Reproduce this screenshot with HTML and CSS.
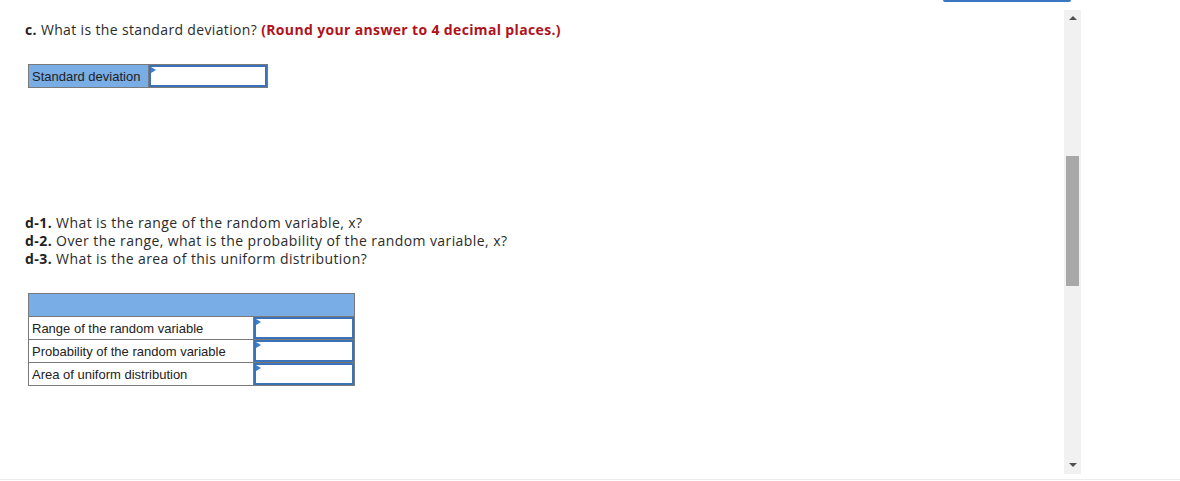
FILE: index.html
```html
<!DOCTYPE html>
<html>
<head>
<meta charset="utf-8">
<link rel="stylesheet" href="styles.css">
</head>
<body>
<div class="topbar"></div>
<div class="page">
  <div class="main">
    <p class="q"><b>c.</b> What is the standard deviation? <span class="red">(Round your answer to 4 decimal places.)</span></p>
    <table class="grid sd">
      <tr>
        <td class="lbl blue">Standard deviation</td>
        <td class="inp w-sd"><div class="box"><span class="tri"></span></div></td>
      </tr>
    </table>
    <div class="qd">
      <p><b>d-1.</b> What is the range of the random variable, x?</p>
      <p><b>d-2.</b> Over the range, what is the probability of the random variable, x?</p>
      <p><b>d-3.</b> What is the area of this uniform distribution?</p>
    </div>
    <table class="grid t2">
      <tr><td class="head" colspan="2"></td></tr>
      <tr>
        <td class="lbl wl">Range of the random variable</td>
        <td class="inp wi"><div class="box"><span class="tri"></span></div></td>
      </tr>
      <tr>
        <td class="lbl wl">Probability of the random variable</td>
        <td class="inp wi"><div class="box"><span class="tri"></span></div></td>
      </tr>
      <tr>
        <td class="lbl wl">Area of uniform distribution</td>
        <td class="inp wi"><div class="box"><span class="tri"></span></div></td>
      </tr>
    </table>
  </div>
  <div class="scroll">
    <div class="arrow up"></div>
    <div class="track"><div class="thumb"></div></div>
    <div class="arrow down"></div>
  </div>
</div>
<div class="footer"></div>
</body>
</html>
```
FILE: styles.css
```css
html, body { margin: 0; padding: 0; background: #fff; }
body { width: 1180px; height: 481px; overflow: hidden; position: relative; font-family: "Open Sans", "Liberation Sans", sans-serif; color: #2b2b2b; }
.topbar { position: absolute; left: 943px; top: 0; width: 128px; height: 2px; background: #3a76c2; border-radius: 0 0 2px 2px; }
.page { display: flex; height: 479px; }
.main { width: 1039px; padding: 21px 0 0 25px; }
.q { margin: 0; font-size: 14px; line-height: 18px; letter-spacing: 0.35px; }
.q b { color: #222; }
.red { color: #b0121b; font-weight: bold; }
.grid { border-collapse: collapse; font-family: "Liberation Sans", Arial, sans-serif; font-size: 13px; color: #222; }
.sd { margin: 25px 0 0 3px; }
.grid td { border: 1px solid #7a7a7a; padding: 0; height: 22px; }
.lbl { padding-left: 3px !important; white-space: nowrap; vertical-align: middle; }
.blue { background: #79ade6; width: 116px; }
.w-sd { width: 118px; }
.inp { vertical-align: top; }
.box { position: relative; height: 18px; border: 2px solid #3b72b8; }
.tri { position: absolute; left: 0; top: 0; width: 0; height: 0; border-top: 3px solid transparent; border-bottom: 3px solid transparent; border-left: 5px solid #3c7ccc; }
.qd { margin-top: 126px; font-size: 14px; line-height: 18px; letter-spacing: 0.42px; }
.qd p { margin: 0; }
.qd b { color: #222; }
.t2 { margin: 25px 0 0 3px; }
.t2 .head { background: #79ade6; height: 22px; }
.wl { width: 221px; }
.wi { width: 100px; }
.scroll { width: 17px; margin-top: 10px; height: 464px; background: #f1f1f1; display: flex; flex-direction: column; align-items: center; }
.arrow { width: 0; height: 0; border-left: 4px solid transparent; border-right: 4px solid transparent; }
.up { border-bottom: 4px solid #505050; margin-top: 6px; }
.down { border-top: 4px solid #505050; margin-bottom: 7px; }
.track { flex: 1; width: 100%; position: relative; }
.thumb { position: absolute; left: 2px; width: 13px; top: 136px; height: 130px; background: #a8a8a8; }
.footer { height: 0; border-top: 1px solid #ececec; }
```
